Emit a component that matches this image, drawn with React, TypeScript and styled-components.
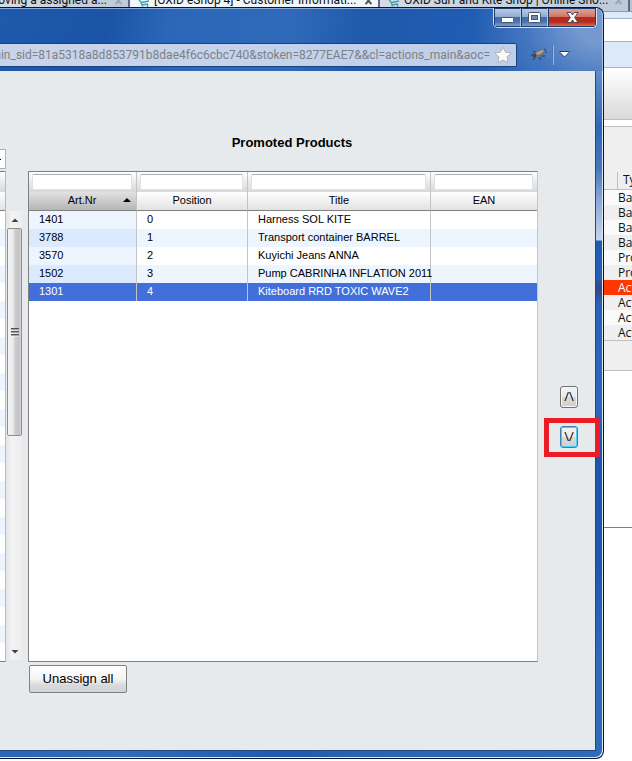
import React from 'react';
import styled, { createGlobalStyle } from 'styled-components';

const ui = '"Open Sans", "Noto Sans", sans-serif';
const chrome = 'Roboto, "Open Sans", sans-serif';
const arial = '"Liberation Sans", Arial, sans-serif';

const GlobalStyle = createGlobalStyle`
  *, *::before, *::after { box-sizing: border-box; }
  html, body { margin: 0; padding: 0; background: #fff; }
  button, input { font: inherit; margin: 0; }
`;

const Desktop = styled.div`
  min-height: 100vh;
  display: grid;
  grid-template-columns: minmax(0, 1fr) 28px;
  grid-template-rows: 12px auto;
  overflow: hidden;
  font-family: ${ui};
`;

/* ---------- browser tabs behind the popup ---------- */

const TabStrip = styled.div`
  grid-column: 1 / -1;
  display: flex;
  height: 12px;
  overflow: hidden;
  background: #b4c3d6;
  border-bottom: 1px solid #8c9aae;
`;

const Tab = styled.button<{ $active?: boolean; $first?: boolean }>`
  flex: 0 0 ${p => (p.$first ? 130 : 250)}px;
  height: 12px;
  display: flex;
  align-items: flex-start;
  gap: 4px;
  padding: 0 5px 0 ${p => (p.$first ? 0 : 8)}px;
  border: 0;
  border-right: 2px solid #5c6c85;
  background: ${p => (p.$active ? '#eff6fc' : 'linear-gradient(90deg, #d3dbe5, #bccad9)')};
  font-family: ${chrome};
  font-size: 12px;
  line-height: 16px;
  color: #111;
  overflow: hidden;
`;

const TabText = styled.span<{ $end?: boolean }>`
  flex: 1;
  min-width: 0;
  margin-top: -8px;
  display: flex;
  justify-content: ${p => (p.$end ? 'flex-end' : 'flex-start')};
  padding-right: ${p => (p.$end ? 3 : 0)}px;
  white-space: nowrap;
`;

/* ---------- popup window ---------- */

const Popup = styled.main`
  position: relative;
  z-index: 1;
  margin: -5px 0 2px;
  display: flex;
  flex-direction: column;
  border: solid #0a1630;
  border-width: 1px 1px 1px 0;
  border-radius: 0 8px 8px 0;
  padding: 0 7px 7px 0;
  box-shadow: inset -1px -1px 0 #dfe9f6, inset 0 1px 0 #6f97cf;
  background:
    linear-gradient(180deg, #6b94cf 0, #5f8ccb 64px, #2f67b6 120px, #4577be 160px, #86a6d6 190px,
      #c4d3ea 230px, #c4d3ea 232px, #1f5db1 233px, #2360b3 268px, #34498d 278px, #34498d 284px,
      #2862b4 294px, #2c69bb 400px, #1c57ac 440px, #1d59ae 560px, #2f6bbb 650px, #2f6bbb 100%)
      right 1px top 0 / 7px 100% no-repeat,
    linear-gradient(90deg, #2b66b8, #2f6cbc 20%, #1f5bae 48%, #2a64b5 60%, #2f6bbb);
`;

const TitleArea = styled.header`
  display: flex;
  flex-direction: column;
  margin-right: -7px;
  padding-right: 7px;
  border-radius: 0 8px 0 0;
  box-shadow: inset 0 1px 0 #86a8da, inset -1px 0 0 #a9c2e5;
  background:
    radial-gradient(ellipse 130px 90px at 100% 30%, #7498cf 20%, rgba(90, 134, 200, 0.55) 60%, transparent 100%),
    linear-gradient(100deg, #1f59ab 0%, #1b54a6 18%, #2b66b8 28%, #3069ba 48%, #2059ab 60%, #1f5cb2 76%, #3269b8 100%);
`;

const Caption = styled.div`
  display: flex;
  justify-content: flex-end;
  align-items: flex-start;
  height: 34px;
`;

const Controls = styled.div`
  display: flex;
  height: 20px;
  margin-right: -1px;
  border: 1px solid #d4e1f4;
  border-top: 0;
  border-radius: 0 0 5px 5px;
  overflow: hidden;
`;

const Control = styled.button<{ $close?: boolean }>`
  width: ${p => (p.$close ? 48 : 27)}px;
  padding: 0;
  display: grid;
  place-items: center;
  border: 1px solid #213c6c;
  border-right-color: ${p => (p.$close ? '#213c6c' : '#b3c8e6')};
  background: ${p =>
    p.$close
      ? 'linear-gradient(180deg, #dfa199 0, #cf7768 45%, #b32d1b 46%, #b52b1b 75%, #d8694c 100%)'
      : 'linear-gradient(180deg, #b9cbe4 0, #90abd2 45%, #456aa5 46%, #4c72ae 75%, #7ba0d4 100%)'};
`;

const MinimizeIcon = styled.svg`
  margin-top: 4px;
`;

const NavBar = styled.div`
  display: flex;
  align-items: center;
  height: 25px;
  margin-bottom: 4px;
`;

const Address = styled.div`
  flex: 1;
  min-width: 0;
  height: 24px;
  display: flex;
  align-items: center;
  padding-right: 4px;
  border: 1px solid #1c3f7d;
  border-left: 0;
  border-radius: 0 2px 2px 0;
  background: linear-gradient(90deg, #c8d4ea, #c4d3ec 50%, #becfea);
`;

const Url = styled.div`
  flex: 1;
  min-width: 0;
  overflow: hidden;
  display: flex;
  justify-content: flex-end;
  padding-right: 4px;
  font-family: ${chrome};
  font-size: 12px;
  line-height: 20px;
  color: #7e8184;
  white-space: nowrap;
`;

const IconButton = styled.button`
  flex: none;
  display: flex;
  padding: 0;
  border: 0;
  background: none;
`;

const NavExtras = styled.div`
  flex: none;
  width: 79px;
  display: flex;
  align-items: center;
  gap: 5px;
  padding-left: 13px;
`;

const Separator = styled.span`
  width: 2px;
  height: 20px;
  background: #4a76b9;
  border-right: 1px solid #9bb6de;
`;

const Content = styled.section`
  flex: 1;
  display: grid;
  grid-template-columns: 6px 16px minmax(0, 1fr) 57px;
  grid-template-rows: 100px auto 88px;
  border: solid #24477f;
  border-width: 0 1px 1px 0;
  background: #e6eaec;
  font-family: ${arial};
  font-size: 11px;
  color: #000;
`;

const SideTop = styled.div`
  display: flex;
  align-items: flex-end;
  padding-bottom: 2px;
`;

const Dropdown = styled.select`
  width: 6px;
  height: 20px;
  padding: 0;
  appearance: none;
  border: 1px solid #b0b2b5;
  border-left: 0;
  background: linear-gradient(#000, #000) 0 9px / 1px 1px no-repeat #fff;
`;

const Heading = styled.h1`
  grid-column: 2 / 4;
  margin: 0;
  padding: 64px 0 0 40px;
  font-size: 13px;
  line-height: 16px;
  font-weight: bold;
  text-align: center;
`;

const SideTable = styled.div`
  border: solid #808080;
  border-width: 1px 0;
  border-right: 1px solid #b8bbbd;
  background: #fff;
`;

const SideFilter = styled.div`
  height: 20px;
  background: linear-gradient(180deg, #fff, #d8d8d8);
`;

const SideHead = styled.div`
  height: 19px;
  border-bottom: 1px solid #808080;
  background: linear-gradient(180deg, #fff, #e2e2e2);
`;

const SideRow = styled.div`
  height: 18px;
  &:nth-child(even) { background: #edf5ff; }
`;

const ScrollBar = styled.div`
  display: flex;
  flex-direction: column;
  margin: 40px 0 2px 1px;
  background: linear-gradient(90deg, #e6e6e6, #f3f3f3 30%, #ededed);
`;

const ScrollArrow = styled.button`
  height: 17px;
  padding: 0;
  border: 0;
  display: grid;
  place-items: center;
  background: none;
`;

const Thumb = styled.div`
  height: 208px;
  display: grid;
  place-items: center;
  border: 1px solid #8e8f8f;
  border-radius: 2px;
  background: linear-gradient(90deg, #f5f5f5 0, #e8e8e8 45%, #d0d0d2 50%, #c2c2c5 85%, #dadada 100%);
`;

const Spacer = styled.div`
  flex: 1;
`;

const Panel = styled.div`
  margin-left: 6px;
  border: 1px solid #808080;
  border-right-color: #c4c7c9;
  background: #fff;
`;

const Table = styled.table`
  width: 100%;
  table-layout: fixed;
  border-collapse: separate;
  border-spacing: 0;
`;

const Col = styled.col<{ $w?: number }>`
  width: ${p => (p.$w ? `${p.$w}px` : 'auto')};
`;

const FilterCell = styled.td`
  height: 20px;
  padding: 2px 4px 2px 3px;
  vertical-align: top;
  border-right: 1px solid #c4c4c4;
  background: linear-gradient(180deg, #fff, #d8d8d8);
  &:last-child { border-right: 0; }
`;

const FilterInput = styled.input`
  display: block;
  width: 100%;
  height: 16px;
  padding: 0 4px;
  border: 1px solid #dfe2ea;
  border-top-color: #abadb3;
  border-radius: 2px;
  background: #fff;
`;

const HeadCell = styled.th<{ $sorted?: boolean }>`
  height: 19px;
  padding: 0 ${p => (p.$sorted ? 3 : 0)}px 2px 0;
  border-right: 1px solid #c4c4c4;
  border-bottom: 1px solid #808080;
  background: ${p =>
    p.$sorted ? 'linear-gradient(180deg, #e2e2e2, #b5b5b5)' : 'linear-gradient(180deg, #fff, #e2e2e2)'};
  font-weight: normal;
  line-height: 16px;
  &:last-child { border-right: 0; }
`;

const SortLabel = styled.span`
  display: grid;
  grid-template-columns: 12px 1fr 10px;
  align-items: center;
`;

const Row = styled.tr<{ $selected?: boolean }>`
  background: #fff;
  &:nth-child(even) { background: #edf5ff; }
  && { ${p => (p.$selected ? 'background: #426fd9; color: #fff;' : '')} }
`;

const Cell = styled.td<{ $tint?: string }>`
  height: 18px;
  padding: 0 0 2px 10px;
  border-right: 1px solid #c4c4c4;
  line-height: 16px;
  white-space: nowrap;
  background: ${p => p.$tint || 'transparent'};
  &:last-child { border-right: 0; }
`;

const MoveColumn = styled.div`
  display: flex;
  flex-direction: column;
  align-items: flex-start;
  gap: 18px;
  padding: 215px 0 0 22px;
`;

const MoveSlot = styled.div`
  position: relative;
  height: 22px;
`;

const MoveButton = styled.button<{ $focus?: boolean }>`
  display: grid;
  place-items: center;
  width: 18px;
  height: 22px;
  padding: 0 0 2px;
  border: 1px solid ${p => (p.$focus ? '#3c7fb1' : '#707070')};
  border-radius: 3px;
  box-shadow: inset 0 0 0 1px ${p => (p.$focus ? '#48d0f4' : '#f8f8f8')};
  background: linear-gradient(180deg, #f2f2f2 0, #ebebeb 50%, #dadada 51%, #cfcfcf 100%);
  font-family: ${ui};
  font-size: 13px;
  line-height: 18px;
  color: #000;
`;

const Highlight = styled.div`
  position: absolute;
  z-index: 2;
  top: -8px;
  right: -22px;
  bottom: -9px;
  left: -16px;
  border: 5px solid #ed1c24;
  pointer-events: none;
`;

const Footer = styled.footer`
  grid-column: 3 / 5;
  padding: 3px 0 0 7px;
`;

const UnassignButton = styled.button`
  width: 98px;
  height: 28px;
  padding: 0 0 2px;
  border: 1px solid #808080;
  border-radius: 2px;
  background: linear-gradient(180deg, #fff 0, #f4f4f4 50%, #d8d8da 75%, #d4d4d6 100%);
  font-size: 13px;
  color: #000;
`;

/* ---------- page behind the popup ---------- */

const BackPage = styled.aside`
  display: flex;
  flex-direction: column;
  margin-left: -6px;
  padding-left: 6px;
  overflow: hidden;
  background: #fff;
  font-size: 12px;
  color: #111;
`;

const Band = styled.div<{ $h: number; $bg: string; $line?: string }>`
  flex: none;
  height: ${p => p.$h}px;
  background: ${p => p.$bg};
  border-bottom: ${p => (p.$line ? `1px solid ${p.$line}` : '0')};
`;

const BackTable = styled.table`
  width: 100%;
  border-spacing: 0;
  table-layout: fixed;
  border-bottom: 1px solid #c0c0c0;
`;

const BackHead = styled.th`
  height: 18px;
  padding: 0 0 2px 5px;
  border-left: 1px solid #c0c0c0;
  border-bottom: 1px solid #c0c0c0;
  background: #efefef;
  font-weight: normal;
  line-height: 15px;
  text-align: left;
  &:first-child { width: 13px; border-left: 0; }
`;

const BackRow = styled.tr<{ $selected?: boolean }>`
  background: #fafafa;
  line-height: 15px;
  &:nth-child(even) { background: #efefef; }
  && { ${p => (p.$selected ? 'background: #ff3600; color: #fff;' : '')} }
  td { height: 15px; padding: 0 0 0 1px; white-space: nowrap; }
`;

const CartIcon = () => (
  <svg width="12" height="8" viewBox="0 0 12 8" fill="none" stroke="#3fa3b5" strokeWidth="1.4">
    <path d="M1 0l3 3M4 2.5L11 1M3 2l1.5 4.5M4 5l6-1M5 7.5h1.5M9.5 4v3" />
  </svg>
);

const CloseMark = ({ dark }: { dark?: boolean }) => (
  <svg width="9" height="5" viewBox="0 0 9 5" stroke={dark ? '#555' : '#9ba6b4'} strokeWidth="2">
    <path d="M1.5 4L5.5 0M3.5 0L7.5 4" />
  </svg>
);

const columns = [
  { name: 'Art.Nr', width: 108 },
  { name: 'Position', width: 111 },
  { name: 'Title' },
  { name: 'EAN', width: 106 },
];

const products = [
  ['1401', '0', 'Harness SOL KITE', ''],
  ['3788', '1', 'Transport container BARREL', ''],
  ['3570', '2', 'Kuyichi Jeans ANNA', ''],
  ['1502', '3', 'Pump CABRINHA INFLATION 2011', ''],
  ['1301', '4', 'Kiteboard RRD TOXIC WAVE2', ''],
];

const types = ['Ban', 'Ban', 'Ban', 'Ban', 'Pro', 'Pro', 'Act', 'Act', 'Act', 'Act'];

export default function App() {
  return (
    <>
      <GlobalStyle />
      <Desktop>
        <TabStrip>
          <Tab $first>
            <TabText $end>Removing a assigned a...</TabText>
            <CloseMark />
          </Tab>
          <Tab $active>
            <CartIcon />
            <TabText>[OXID eShop 4] - Customer Informati...</TabText>
            <CloseMark dark />
          </Tab>
          <Tab>
            <CartIcon />
            <TabText>OXID Surf and Kite Shop | Online Sho...</TabText>
            <CloseMark />
          </Tab>
        </TabStrip>

        <Popup>
          <TitleArea>
            <Caption>
              <Controls>
                <Control aria-label="Minimize">
                  <MinimizeIcon width="13" height="6" viewBox="0 0 13 6">
                    <rect x="0.5" y="0.5" width="12" height="5" rx="1" fill="#fff" stroke="#4b5568" />
                  </MinimizeIcon>
                </Control>
                <Control aria-label="Maximize">
                  <svg width="13" height="11" viewBox="0 0 13 11">
                    <rect x="0.5" y="0.5" width="12" height="10" rx="1" fill="#fff" stroke="#4b5568" />
                    <rect x="3.5" y="3.5" width="6" height="4" fill="#6c8cba" stroke="#4b5568" />
                  </svg>
                </Control>
                <Control $close aria-label="Close">
                  <svg width="13" height="11" viewBox="0 0 13 11">
                    <path
                      d="M1 .5h3.5L6.500 3 8.500 .5H12L8.700 5.500 12 10.500H8.500L6.500 8 4.500 10.500H1L4.300 5.500z"
                      fill="#fff"
                      stroke="#4f4653"
                    />
                  </svg>
                </Control>
              </Controls>
            </Caption>
            <NavBar>
              <Address>
                <Url>
                  admin_sid=81a5318a8d853791b8dae4f6c6cbc740&amp;stoken=8277EAE7&amp;&amp;cl=actions_main&amp;aoc=
                </Url>
                <IconButton aria-label="Bookmark this page">
                  <svg width="18" height="18" viewBox="0 0 18 18">
                    <path
                      d="M9 1l2.500 5.200 5.800.7-4.300 4 1.100 5.800L9 13.900l-5.100 2.800 1.100-5.800-4.300-4 5.800-.7z"
                      fill="#fbfbfb"
                      stroke="#b3b3b3"
                    />
                  </svg>
                </IconButton>
              </Address>
              <NavExtras>
                <IconButton aria-label="Firebug">
                  <svg width="17" height="15" viewBox="0 0 17 15">
                    <path d="M3 4l4 2M1 8l5 0M3 13l3-4M9 4l-1 3M15 9l-4 0M11 13l-2-3M14 3l2-1M15 5l2 0" stroke="#26395e" />
                    <ellipse cx="9.500" cy="6.500" rx="5.500" ry="3.200" transform="rotate(-24 9.500 6.500)" fill="#77736c" />
                    <ellipse cx="10" cy="5.500" rx="4" ry="1.300" transform="rotate(-24 10 5.500)" fill="#aba79e" />
                    <circle cx="4.500" cy="8.500" r="2" fill="#4a463f" />
                  </svg>
                </IconButton>
                <Separator />
                <IconButton aria-label="More tools">
                  <svg width="11" height="7" viewBox="0 0 11 7">
                    <path d="M1 0.500h9v1L5.500 6 1 1.500z" fill="#fff" stroke="#173a72" />
                  </svg>
                </IconButton>
              </NavExtras>
            </NavBar>
          </TitleArea>

          <Content>
            <SideTop>
              <Dropdown aria-label="Category" />
            </SideTop>
            <Heading>Promoted Products</Heading>
            <div />

            <SideTable>
              <SideFilter />
              <SideHead />
              <div>
                {Array.from({ length: 25 }, (_, i) => (
                  <SideRow key={i} />
                ))}
              </div>
            </SideTable>

            <ScrollBar>
              <ScrollArrow aria-label="Scroll up">
                <svg width="8" height="4" viewBox="0 0 8 4">
                  <path d="M0.500 4L4 0.500 7.500 4z" fill="#444" />
                </svg>
              </ScrollArrow>
              <Thumb>
                <svg width="8" height="9" viewBox="0 0 8 9">
                  <path d="M0 1h8M0 4h8M0 7h8" stroke="#555" strokeWidth="2" />
                  <path d="M0 2h8M0 5h8M0 8h8" stroke="#f4f4f4" strokeWidth="1" />
                </svg>
              </Thumb>
              <Spacer />
              <ScrollArrow aria-label="Scroll down">
                <svg width="8" height="4" viewBox="0 0 8 4">
                  <path d="M0.500 0L4 3.500 7.500 0z" fill="#444" />
                </svg>
              </ScrollArrow>
            </ScrollBar>

            <Panel>
              <Table>
                <colgroup>
                  {columns.map(c => (
                    <Col key={c.name} $w={c.width} />
                  ))}
                </colgroup>
                <thead>
                  <tr>
                    {columns.map(c => (
                      <FilterCell key={c.name}>
                        <FilterInput aria-label={`Filter ${c.name}`} />
                      </FilterCell>
                    ))}
                  </tr>
                  <tr>
                    {columns.map((c, i) => (
                      <HeadCell key={c.name} $sorted={i === 0} scope="col">
                        {i === 0 ? (
                          <SortLabel>
                            <span />
                            {c.name}
                            <svg width="8" height="4" viewBox="0 0 8 4">
                              <path d="M0 4L4 0l4 4z" />
                            </svg>
                          </SortLabel>
                        ) : (
                          c.name
                        )}
                      </HeadCell>
                    ))}
                  </tr>
                </thead>
                <tbody>
                  {products.map((row, r) => (
                    <Row key={row[0]} $selected={r === 4}>
                      {row.map((value, c) => (
                        <Cell
                          key={c}
                          $tint={c === 0 && r !== 4 ? (r % 2 ? '#dbeaff' : '#edf5ff') : undefined}
                        >
                          {value}
                        </Cell>
                      ))}
                    </Row>
                  ))}
                </tbody>
              </Table>
            </Panel>

            <MoveColumn>
              <MoveSlot>
                <MoveButton aria-label="Move up">/\</MoveButton>
              </MoveSlot>
              <MoveSlot>
                <MoveButton $focus aria-label="Move down">\/</MoveButton>
                <Highlight />
              </MoveSlot>
            </MoveColumn>

            <Footer>
              <UnassignButton>Unassign all</UnassignButton>
            </Footer>
          </Content>
        </Popup>

        <BackPage>
          <Band $h={7} $bg="#dcebfa" $line="#a3b4cb" />
          <Band $h={23} $bg="#fff" $line="#a3b4cb" />
          <Band $h={26} $bg="#dbe9f9" $line="#a3b4cb" />
          <Band $h={52} $bg="linear-gradient(180deg, #fff, #dadada)" $line="#bdbdbd" />
          <Band $h={7} $bg="#fff" $line="#c0c0c0" />
          <Band $h={45} $bg="#efefef" />
          <BackTable>
            <thead>
              <tr>
                <BackHead />
                <BackHead scope="col">Type</BackHead>
              </tr>
            </thead>
            <tbody>
              {types.map((t, i) => (
                <BackRow key={i} $selected={i === 6}>
                  <td />
                  <td>{t}</td>
                </BackRow>
              ))}
            </tbody>
          </BackTable>
          <Band $h={30} $bg="#efefef" $line="#c0c0c0" />
          <Band $h={157} $bg="#fff" $line="#808080" />
        </BackPage>
      </Desktop>
    </>
  );
}
